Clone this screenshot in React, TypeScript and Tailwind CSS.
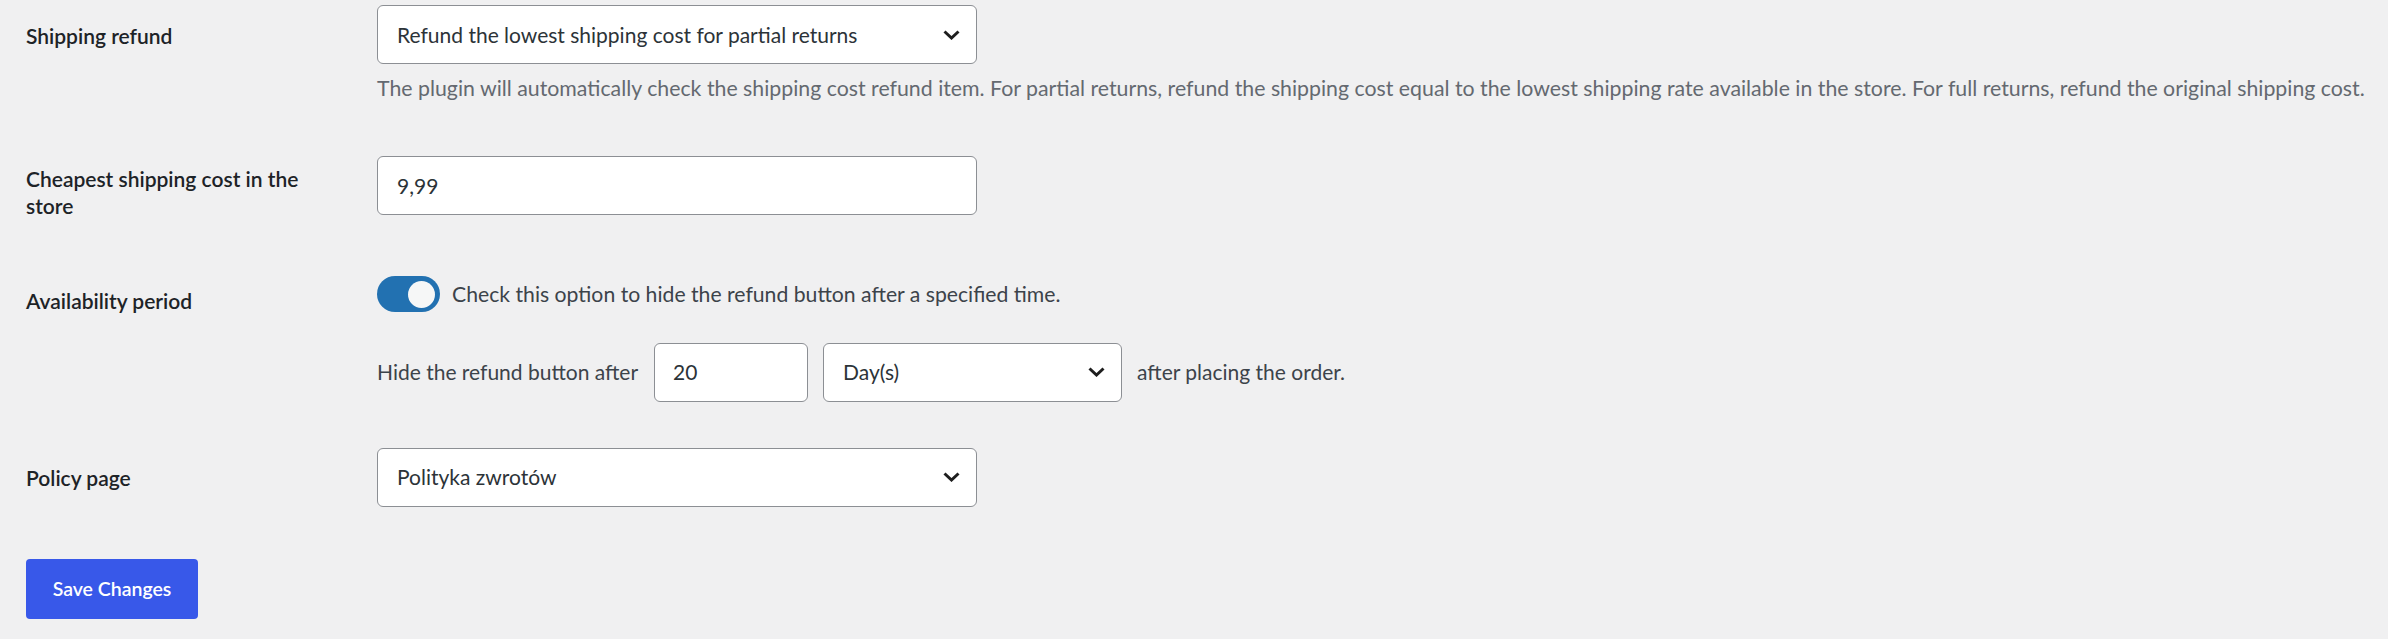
import React from "react";

function Chevron() {
  return (
    <svg width="17" height="10" viewBox="0 0 17 10" fill="none" aria-hidden="true">
      <path d="M1.5 1.5 L8.5 8 L15.5 1.5" stroke="#1e1e1e" strokeWidth="3" strokeLinecap="butt" strokeLinejoin="miter" />
    </svg>
  );
}

function SelectBox({ value, className }: { value: string; className: string }) {
  return (
    <div
      className={
        "flex h-[59px] shrink-0 items-center justify-between rounded-[6px] border border-[#8c8f94] bg-white pl-[19px] pr-[16px] text-[#2c3338] " +
        className
      }
    >
      <span className="leading-[30px]">{value}</span>
      <Chevron />
    </div>
  );
}

function TextBox({ value, className }: { value: string; className: string }) {
  return (
    <div
      className={
        "flex h-[59px] shrink-0 items-center rounded-[6px] border border-[#8c8f94] bg-white pl-[18px] text-[#2c3338] " +
        className
      }
    >
      <span className="leading-[30px]">{value}</span>
    </div>
  );
}

export default function App() {
  return (
    <div className="min-h-[639px] w-full bg-[#f0f0f1] pl-[26px] pt-[5px] font-['Lato',sans-serif] text-[21px] text-[#3c434a]">
      {/* Shipping refund */}
      <div className="flex items-start">
        <div className="w-[351px] shrink-0 pt-[16.5px] font-semibold leading-[27px] text-[#1d2327]">
          Shipping refund
        </div>
        <div className="flex flex-col">
          <SelectBox value="Refund the lowest shipping cost for partial returns" className="w-[600px]" />
          <p className="mt-[9px] whitespace-nowrap text-[21.3px] leading-[30px] text-[#646970]">
            The plugin will automatically check the shipping cost refund item. For partial returns, refund the shipping
            cost equal to the lowest shipping rate available in the store. For full returns, refund the original shipping
            cost.
          </p>
        </div>
      </div>

      {/* Cheapest shipping cost */}
      <div className="mt-[53px] flex h-[59px] items-start">
        <div className="w-[351px] shrink-0 pt-[8.5px] font-semibold leading-[27px] text-[#1d2327]">
          Cheapest shipping cost in the
          <br />
          store
        </div>
        <TextBox value="9,99" className="w-[600px] pl-[19px]" />
      </div>

      {/* Availability period */}
      <div className="mt-[61px] flex items-start">
        <div className="w-[351px] shrink-0 pt-[10.5px] font-semibold leading-[27px] text-[#1d2327]">
          Availability period
        </div>
        <div className="flex flex-col">
          <div className="flex items-center gap-[12px]">
            <div className="flex h-[36px] w-[63px] shrink-0 items-center justify-end rounded-full bg-[#2271b1] pr-[5px]">
              <div className="h-[27px] w-[27px] rounded-full bg-[#f6f7f7]" />
            </div>
            <span className="text-[21.2px] leading-[30px]">
              Check this option to hide the refund button after a specified time.
            </span>
          </div>
          <div className="mt-[30.5px] flex items-center">
            <span className="leading-[30px]">Hide the refund button after</span>
            <TextBox value="20" className="ml-[16px] w-[154px]" />
            <SelectBox value="Day(s)" className="ml-[15px] w-[299px]" />
            <span className="ml-[15px] leading-[30px]">after placing the order.</span>
          </div>
        </div>
      </div>

      {/* Policy page */}
      <div className="mt-[46px] flex items-start">
        <div className="w-[351px] shrink-0 pt-[16.5px] font-semibold leading-[27px] text-[#1d2327]">Policy page</div>
        <SelectBox value="Polityka zwrotów" className="w-[600px]" />
      </div>

      {/* Save */}
      <button
        type="button"
        className="mt-[52px] flex h-[60px] w-[172px] items-center justify-center rounded-[4px] bg-[#3858e9] text-[19.5px] font-semibold text-white"
      >
        Save Changes
      </button>
    </div>
  );
}
